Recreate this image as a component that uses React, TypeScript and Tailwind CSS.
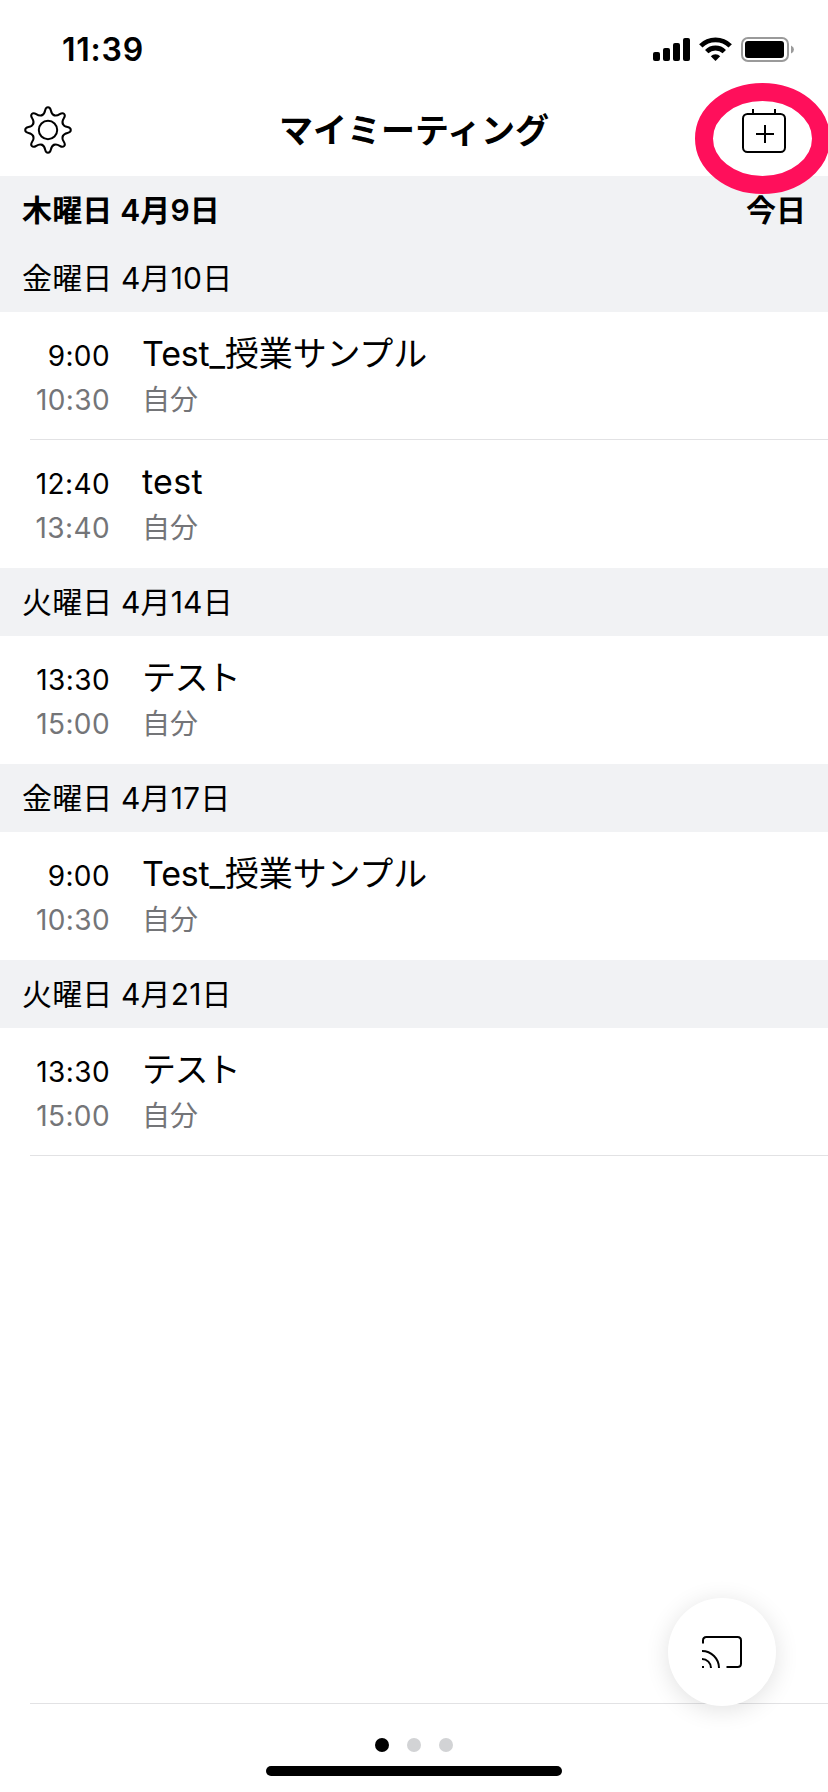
interface Meeting {
  start: string;
  end: string;
  title: string;
  host: string;
}

interface Day {
  weekday: string;
  month: string;
  day: string;
  meetings: Meeting[];
}

const days: Day[] = [
  {
    weekday: "金曜日",
    month: "4",
    day: "10",
    meetings: [
      { start: "9:00", end: "10:30", title: "Test_授業サンプル", host: "自分" },
      { start: "12:40", end: "13:40", title: "test", host: "自分" },
    ],
  },
  {
    weekday: "火曜日",
    month: "4",
    day: "14",
    meetings: [{ start: "13:30", end: "15:00", title: "テスト", host: "自分" }],
  },
  {
    weekday: "金曜日",
    month: "4",
    day: "17",
    meetings: [{ start: "9:00", end: "10:30", title: "Test_授業サンプル", host: "自分" }],
  },
  {
    weekday: "火曜日",
    month: "4",
    day: "21",
    meetings: [{ start: "13:30", end: "15:00", title: "テスト", host: "自分" }],
  },
];

const teeth = [0, 45, 90, 135, 180, 225, 270, 315];

// kana-only titles are set tighter than mixed or latin ones
const titleTracking = (title: string) => {
  if (/^[ァ-ヶー]+$/.test(title)) return "tracking-[-1.6px]";
  if (/^[\x20-\x7e]+$/.test(title)) return "tracking-[0.3px]";
  return "tracking-[-0.15px]";
};

const GearIcon = () => (
  <svg className="w-12 h-12" viewBox="-24 -24 48 48" fill="none" stroke="black" strokeWidth="2" strokeLinecap="round">
    <circle r="9.2" />
    {teeth.map((angle) => (
      <path
        key={angle}
        transform={`rotate(${angle})`}
        d="M-6.12 -14.78C-3.9 -15.7 -3.4 -17 -2.9 -19.5C-2.4 -21.9 -1.5 -22.8 0 -22.8C1.5 -22.8 2.4 -21.9 2.9 -19.5C3.4 -17 3.9 -15.7 6.12 -14.78"
      />
    ))}
  </svg>
);

const CalendarPlusIcon = () => (
  <svg className="w-11 h-11" viewBox="0 0 44 44" fill="none" stroke="black" strokeWidth="2">
    <rect x="1" y="5" width="42" height="38" rx="4.5" />
    <path d="M11 0v5M33 0v5M14 25h18M23 16v18" />
  </svg>
);

const CastIcon = () => (
  <svg className="w-10 h-8" viewBox="0 0 40 32" fill="none" stroke="black" strokeWidth="2">
    <path d="M1 7.5V4.5Q1 1 4.5 1H35.5Q39 1 39 4.5V27.5Q39 31 35.5 31H24.5" />
    <path d="M0 15A17 17 0 0 1 17 32M0 23A9 9 0 0 1 9 32" />
    <path d="M0 31H2" />
  </svg>
);

const StatusIcons = () => (
  <svg className="w-[142px] h-[26px]" viewBox="0 0 142 26">
    <rect x="0" y="15" width="7" height="9" rx="2" />
    <rect x="10" y="11" width="7" height="13" rx="2" />
    <rect x="20" y="6" width="7" height="18" rx="2" />
    <rect x="30" y="1" width="7" height="23" rx="2" />
    <g fill="none" stroke="black" strokeWidth="4.8">
      <path d="M47.8 8.9A20.8 20.8 0 0 1 77.2 8.9" />
      <path d="M53.7 14.6A12.6 12.6 0 0 1 71.3 14.6" />
    </g>
    <path d="M62.5 24L57.8 19.3A6.6 6.6 0 0 1 67.2 19.3Z" />
    <rect x="89" y="1" width="46" height="23" rx="6" fill="none" stroke="#9a9a9a" strokeWidth="2" />
    <rect x="92" y="4" width="39" height="17" rx="3" />
    <path d="M138 8.5Q141 10 141 12.5T138 16.5Z" fill="#9a9a9a" />
  </svg>
);

const DateLabel = ({ weekday, month, day }: { weekday: string; month: string; day: string }) => (
  <span className="tracking-[0.15px]">
    {weekday} {month}月{day}日
  </span>
);

const MeetingRow = ({ meeting, divider }: { meeting: Meeting; divider: boolean }) => (
  <div className="h-32 pl-[30px]">
    <div className={`h-full flex gap-8 pt-5 ${divider ? "border-b border-[#e2e2e4]" : ""}`}>
      <div className="w-[80px] text-right text-[28px] leading-[44px] tracking-[0.4px] pt-[2px]">
        <p>{meeting.start}</p>
        <p className="text-[#747578]">{meeting.end}</p>
      </div>
      <div>
        <p className={`text-[34px] leading-[44px] ${titleTracking(meeting.title)}`}>{meeting.title}</p>
        <p className="pt-[2px] text-[28px] leading-[44px] text-[#747578]">{meeting.host}</p>
      </div>
    </div>
  </div>
);

export default function App() {
  return (
    <div className="relative w-[828px] h-[1792px] flex flex-col overflow-hidden bg-white text-black font-['Inter','Noto_Sans_CJK_JP',sans-serif]">
      <div className="h-[88px] shrink-0 flex items-start justify-between pl-[62px] pr-[33px] pt-[37px]">
        <span className="text-[32px] leading-[26px] font-semibold tracking-[0.75px]">11:39</span>
        <StatusIcons />
      </div>

      <header className="h-[88px] shrink-0 flex items-start justify-between pl-6 pr-[42px]">
        <div className="pt-[18px] w-12">
          <GearIcon />
        </div>
        <h1 className="pt-[18px] pl-[14px] text-[34px] leading-[50px] font-semibold">マイミーティング</h1>
        <button className="pt-[21px]">
          <CalendarPlusIcon />
        </button>
      </header>

      <main className="grow">
        <div className="h-[68px] flex items-center justify-between px-[22px] bg-[#f1f2f4] text-[30px] font-semibold">
          <DateLabel weekday="木曜日" month="4" day="9" />
          <span>今日</span>
        </div>
        {days.map((d, i) => (
          <section key={i}>
            <h2 className="h-[68px] flex items-center px-[22px] bg-[#f1f2f4] text-[30px]">
              <DateLabel weekday={d.weekday} month={d.month} day={d.day} />
            </h2>
            {d.meetings.map((m, j) => (
              <MeetingRow
                key={j}
                meeting={m}
                divider={j < d.meetings.length - 1 || i === days.length - 1}
              />
            ))}
          </section>
        ))}
      </main>

      <footer className="h-[89px] shrink-0 flex flex-col items-center pl-[30px]">
        <div className="w-full h-px bg-[#e2e2e4]" />
        <div className="flex gap-[18px] mt-[34px] -ml-[30px]">
          <span className="size-3.5 rounded-full bg-black" />
          <span className="size-3.5 rounded-full bg-[#d2d3d5]" />
          <span className="size-3.5 rounded-full bg-[#d2d3d5]" />
        </div>
        <div className="w-[296px] h-2.5 mt-3.5 -ml-[30px] rounded-full bg-black" />
      </footer>

      {/* floating share button */}
      <button className="absolute right-[52px] bottom-[86px] size-[108px] rounded-full bg-white flex items-center justify-center shadow-[0_4px_24px_rgba(0,0,0,0.12)]">
        <CastIcon />
      </button>

      {/* highlight ring around the add button */}
      <svg className="absolute left-[694px] top-[82px] w-[134px] h-[114px]" viewBox="694 82 134 114">
        <ellipse cx="762.5" cy="138.5" rx="58.5" ry="46.5" fill="none" stroke="#ff0f5b" strokeWidth="18" />
      </svg>
    </div>
  );
}
